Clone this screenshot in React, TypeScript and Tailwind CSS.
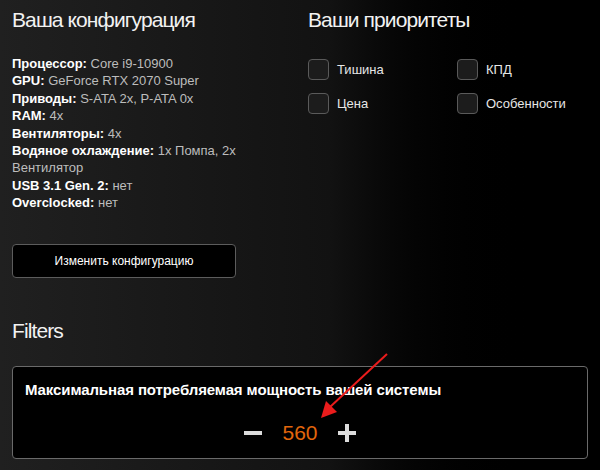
import React from "react";

const specs: [string, string][] = [
  ["Процессор:", "Core i9-10900"],
  ["GPU:", "GeForce RTX 2070 Super"],
  ["Приводы:", "S-ATA 2x, P-ATA 0x"],
  ["RAM:", "4x"],
  ["Вентиляторы:", "4x"],
  ["Водяное охлаждение:", "1x Помпа, 2x Вентилятор"],
  ["USB 3.1 Gen. 2:", "нет"],
  ["Overclocked:", "нет"],
];

function Check({ label }: { label: string }) {
  return (
    <div className="flex items-center gap-2 h-[21px]">
      <div className="w-[21px] h-[21px] rounded-[4px] border border-[#5a5a5a] bg-[#1c1c1c]" />
      <span className="text-[13px] text-[#e6e6e6]">{label}</span>
    </div>
  );
}

export default function App() {
  return (
    <div
      className="relative w-[600px] h-[470px] overflow-hidden bg-gradient-to-r from-[#202020] via-[#121212] via-55% to-[#000000] to-90% text-white"
      style={{ fontFamily: '"Liberation Sans", Arial, sans-serif' }}
    >
      <div className="flex px-3 pt-2">
        <div className="w-[296px] shrink-0">
          <h2 className="text-[21px] leading-[24px] tracking-[-0.9px] text-[#f2f2f2]">Ваша конфигурация</h2>
          <div className="mt-[23px] w-[252px] text-[13px] leading-[17.4px]">
            {specs.map(([k, v]) => (
              <div key={k}>
                <span className="font-bold text-white">{k}</span>{" "}
                <span className="text-[#bdbdbd]">{v}</span>
              </div>
            ))}
          </div>
          <button className="mt-8 w-[224px] h-[34px] rounded-[4px] border border-[#5c5c5c] bg-black text-[12px] text-white flex items-center justify-center">
            Изменить конфигурацию
          </button>
        </div>
        <div className="flex-1">
          <h2 className="text-[21px] leading-[24px] tracking-[-0.9px] text-[#f2f2f2]">Ваши приоритеты</h2>
          <div className="mt-[27px] grid grid-cols-[149px_1fr] gap-y-[13px]">
            <Check label="Тишина" />
            <Check label="КПД" />
            <Check label="Цена" />
            <Check label="Особенности" />
          </div>
        </div>
      </div>

      <h2 className="mx-3 mt-[41px] text-[21px] leading-[24px] tracking-[-0.9px] text-[#f2f2f2]">Filters</h2>

      <div className="mx-3 mt-[23px] h-[93px] rounded-[4px] border border-[#6a6a6a] bg-black px-3 pt-[14px]">
        <div className="text-[15px] leading-[18px] tracking-[-0.1px] font-bold text-white">
          Максимальная потребляемая мощность вашей системы
        </div>
        <div className="mt-[22px] flex items-center justify-center gap-5 h-6">
          <svg width="18" height="18" viewBox="0 0 18 18">
            <rect x="0" y="7" width="18" height="4" fill="#dcdcdc" />
          </svg>
          <span className="text-[21px] leading-6 text-[#e2660c]">560</span>
          <svg width="18" height="18" viewBox="0 0 18 18">
            <rect x="0" y="7" width="18" height="4" fill="#dcdcdc" />
            <rect x="7" y="0" width="4" height="18" fill="#dcdcdc" />
          </svg>
        </div>
      </div>

      <svg className="absolute left-0 top-0 pointer-events-none" width="600" height="470">
        <line x1="387" y1="354" x2="330" y2="407" stroke="#ea1c1c" strokeWidth="2" />
        <polygon points="321,418 326,401 337,412" fill="#ea1c1c" />
      </svg>
    </div>
  );
}
